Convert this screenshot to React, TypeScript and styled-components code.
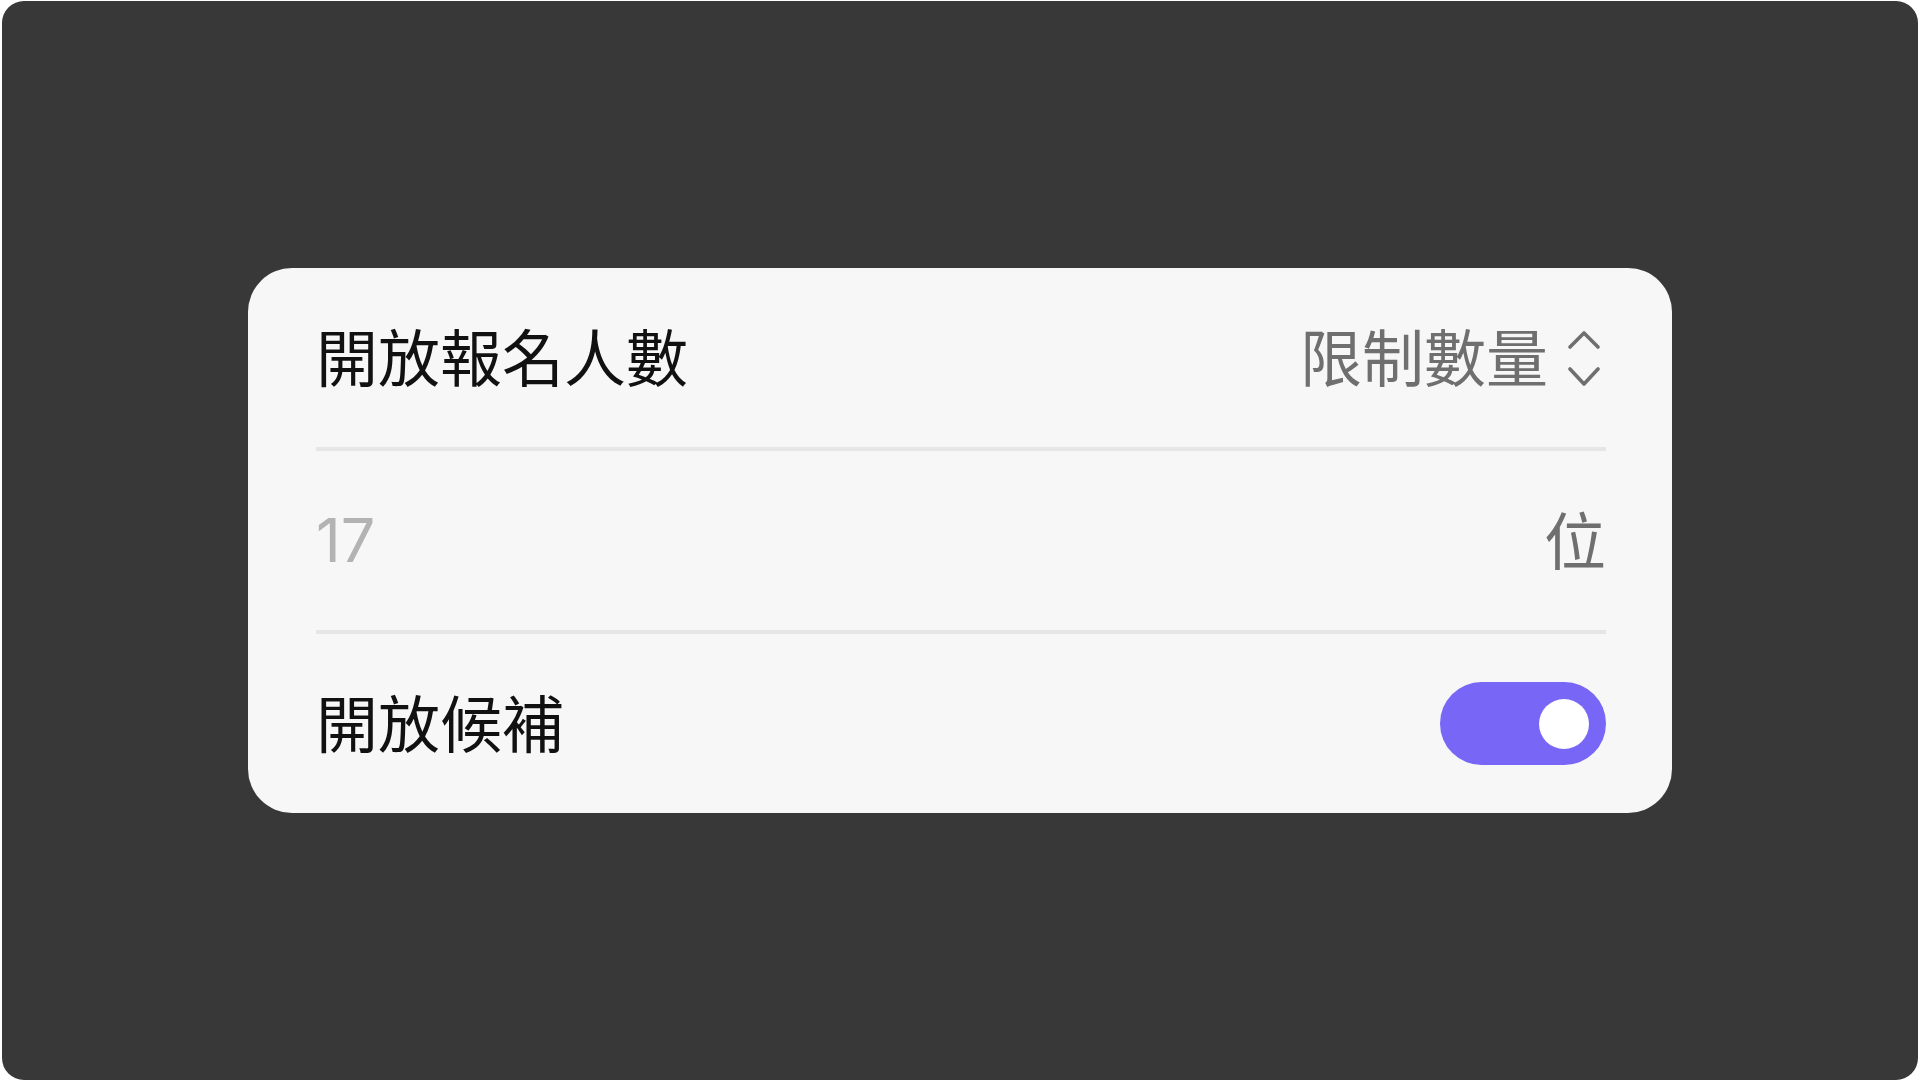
import styled, { createGlobalStyle } from "styled-components";

const GlobalStyle = createGlobalStyle`
    html, body {
        margin: 0;
        padding: 0;
        background: #ffffff;
    }
    * {
        box-sizing: border-box;
    }
`;

const Frame = styled.div`
    margin: 1px 2px;
    height: 1079px;
    background: #383838;
    border-radius: 22px;
    display: flex;
    align-items: center;
    justify-content: center;
`;

const Card = styled.div`
    width: 1424px;
    background: #f7f7f7;
    border-radius: 44px;
    padding: 0 66px 0 68px;
    display: flex;
    flex-direction: column;
`;

const Row = styled.div`
    height: 179px;
    display: flex;
    align-items: center;
    justify-content: space-between;
`;

const Divider = styled.div`
    height: 4px;
    background: #e6e6e6;
`;

const Label = styled.span`
    font-family: "Noto Sans CJK TC", "Noto Sans", sans-serif;
    font-size: 62px;
    line-height: 1;
    margin-bottom: 5px;
    color: #111111;
`;

const Value = styled.span`
    font-family: "Noto Sans CJK TC", "Noto Sans", sans-serif;
    font-size: 62px;
    line-height: 1;
    margin-bottom: 5px;
    color: #6f6f6f;
`;

const NumberInput = styled.span`
    font-family: Inter, "Noto Sans", sans-serif;
    font-size: 61px;
    line-height: 1;
    color: #b3b3b3;
`;

const Picker = styled.div`
    display: flex;
    align-items: center;
    gap: 18px;
`;

const Toggle = styled.div<{ $on: boolean }>`
    width: 166px;
    height: 83px;
    border-radius: 42px;
    background: ${(p) => (p.$on ? "#7866f7" : "#d0d0d0")};
    display: flex;
    align-items: center;
    justify-content: ${(p) => (p.$on ? "flex-end" : "flex-start")};
    padding: 0 17px;
`;

const Knob = styled.div`
    width: 50px;
    height: 50px;
    border-radius: 50%;
    background: #ffffff;
`;

const UpDown = () => (
    <svg width="40" height="56" viewBox="0 0 40 56" fill="none" stroke="#6f6f6f" strokeWidth="3.6" strokeLinecap="round" strokeLinejoin="round">
        <polyline points="4,17 18,3 32,17" />
        <polyline points="4,39 18,54 32,39" />
    </svg>
);

const App = () => {
    return (
        <>
            <GlobalStyle />
            <Frame>
                <Card>
                    <Row>
                        <Label>開放報名人數</Label>
                        <Picker>
                            <Value>限制數量</Value>
                            <UpDown />
                        </Picker>
                    </Row>
                    <Divider />
                    <Row>
                        <NumberInput>17</NumberInput>
                        <Value>位</Value>
                    </Row>
                    <Divider />
                    <Row>
                        <Label>開放候補</Label>
                        <Toggle $on>
                            <Knob />
                        </Toggle>
                    </Row>
                </Card>
            </Frame>
        </>
    );
};

export default App;
